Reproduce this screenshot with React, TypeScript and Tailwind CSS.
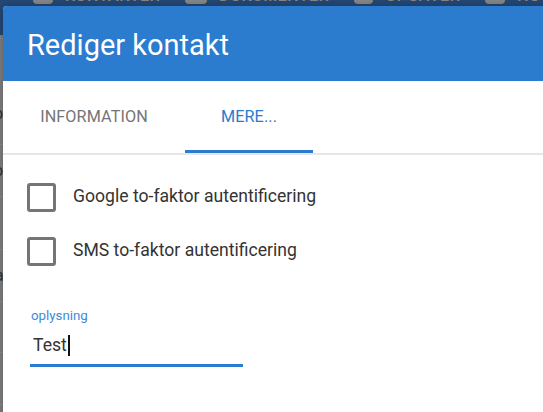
import React from "react";

const font = { fontFamily: "Roboto, 'Noto Sans', Arial, sans-serif" };

function NavItem({ w, label }: { w: number; label: string }) {
  return (
    <div className="flex items-end gap-[12px]">
      <div className="h-[18px] rounded-[4px] bg-[#8a8a8a]" style={{ width: w }} />
      <span className="text-[16px] leading-[16px] font-medium text-[#8a8a8a] tracking-[0.5px]">{label}</span>
    </div>
  );
}

function Checkbox({ label }: { label: string }) {
  return (
    <div className="flex items-center h-[30px]">
      <div className="w-[29px] h-[29px] rounded-[3px] border-[3px] border-[#757575] box-border" />
      <span className="ml-[17px] -mt-[3px] text-[17.6px] leading-[20px] text-[#333333]">{label}</span>
    </div>
  );
}

export default function App() {
  return (
    <div className="relative w-[543px] h-[412px] overflow-hidden bg-[#828282]" style={font}>
      {/* background page behind the dialog */}
      <div className="h-[35px] bg-[#254a78] overflow-hidden">
        <div className="flex items-end gap-[25px] pl-[33px] -mt-[14px] h-[18px]">
          <NavItem w={20} label="KONTAKTER" />
          <NavItem w={22} label="DOKUMENTER" />
          <NavItem w={19} label="OPGAVER" />
          <NavItem w={20} label="NOTER" />
        </div>
      </div>
      <div className="flex flex-col">
        <div className="h-[4px] border-b border-[#8e8e8e]" />
        <div className="h-[106px] border-b border-[#8e8e8e] flex items-end pb-[18px] -ml-[6px] text-[16px] text-[#333]">oc</div>
        <div className="h-[52px] border-b border-[#8e8e8e] flex items-center -ml-[6px] text-[16px] text-[#333]">oc</div>
        <div className="h-[53px] border-b border-[#8e8e8e]" />
        <div className="h-[52px] border-b border-[#8e8e8e] flex items-center -ml-[5px] text-[16px] text-[#333]">af</div>
        <div className="h-[51px] border-b border-[#8e8e8e]" />
        <div className="h-[52px] border-b border-[#8e8e8e]" />
      </div>

      {/* dialog */}
      <div className="absolute left-[3px] top-[6px] w-[600px] h-[440px] bg-white rounded-tl-[4px] overflow-hidden shadow-[0_0_12px_rgba(0,0,0,0.3)]">
        <div className="h-[75px] bg-[#2b7bce] flex items-center pl-[24px]">
          <h1 className="text-[29px] leading-[34px] text-white font-normal mt-[3px]">Rediger kontakt</h1>
        </div>
        <div className="flex h-[72px] border-b-[2px] border-[#e6e6e6] box-content">
          <div className="w-[182px] flex items-center justify-center text-[16.2px] text-[#757575] tracking-[0.1px]">
            INFORMATION
          </div>
          <div className="w-[128px] flex flex-col">
            <div className="flex-1 flex items-center justify-center text-[16.2px] text-[#2b7bce] tracking-[0.1px] pt-[3px]">
              MERE...
            </div>
            <div className="h-[3px] bg-[#2b7bce]" />
          </div>
        </div>
        <div className="pl-[24px] pt-[27px] flex flex-col gap-[24px]">
          <Checkbox label="Google to-faktor autentificering" />
          <Checkbox label="SMS to-faktor autentificering" />
        </div>
        <div className="ml-[27px] mt-[42px] w-[213px] flex flex-col">
          <span className="pl-[1px] text-[13.3px] leading-[16px] text-[#3d8ad8]">oplysning</span>
          <div className="mt-[9px] pl-[3px] h-[24px] flex items-center text-[17.6px] text-[#333333]">
            <span>Test</span>
            <span className="ml-[1px] w-[2px] h-[21px] bg-[#111]" />
          </div>
          <div className="mt-[7px] h-[3px] bg-[#2b7bce]" />
        </div>
      </div>
    </div>
  );
}
